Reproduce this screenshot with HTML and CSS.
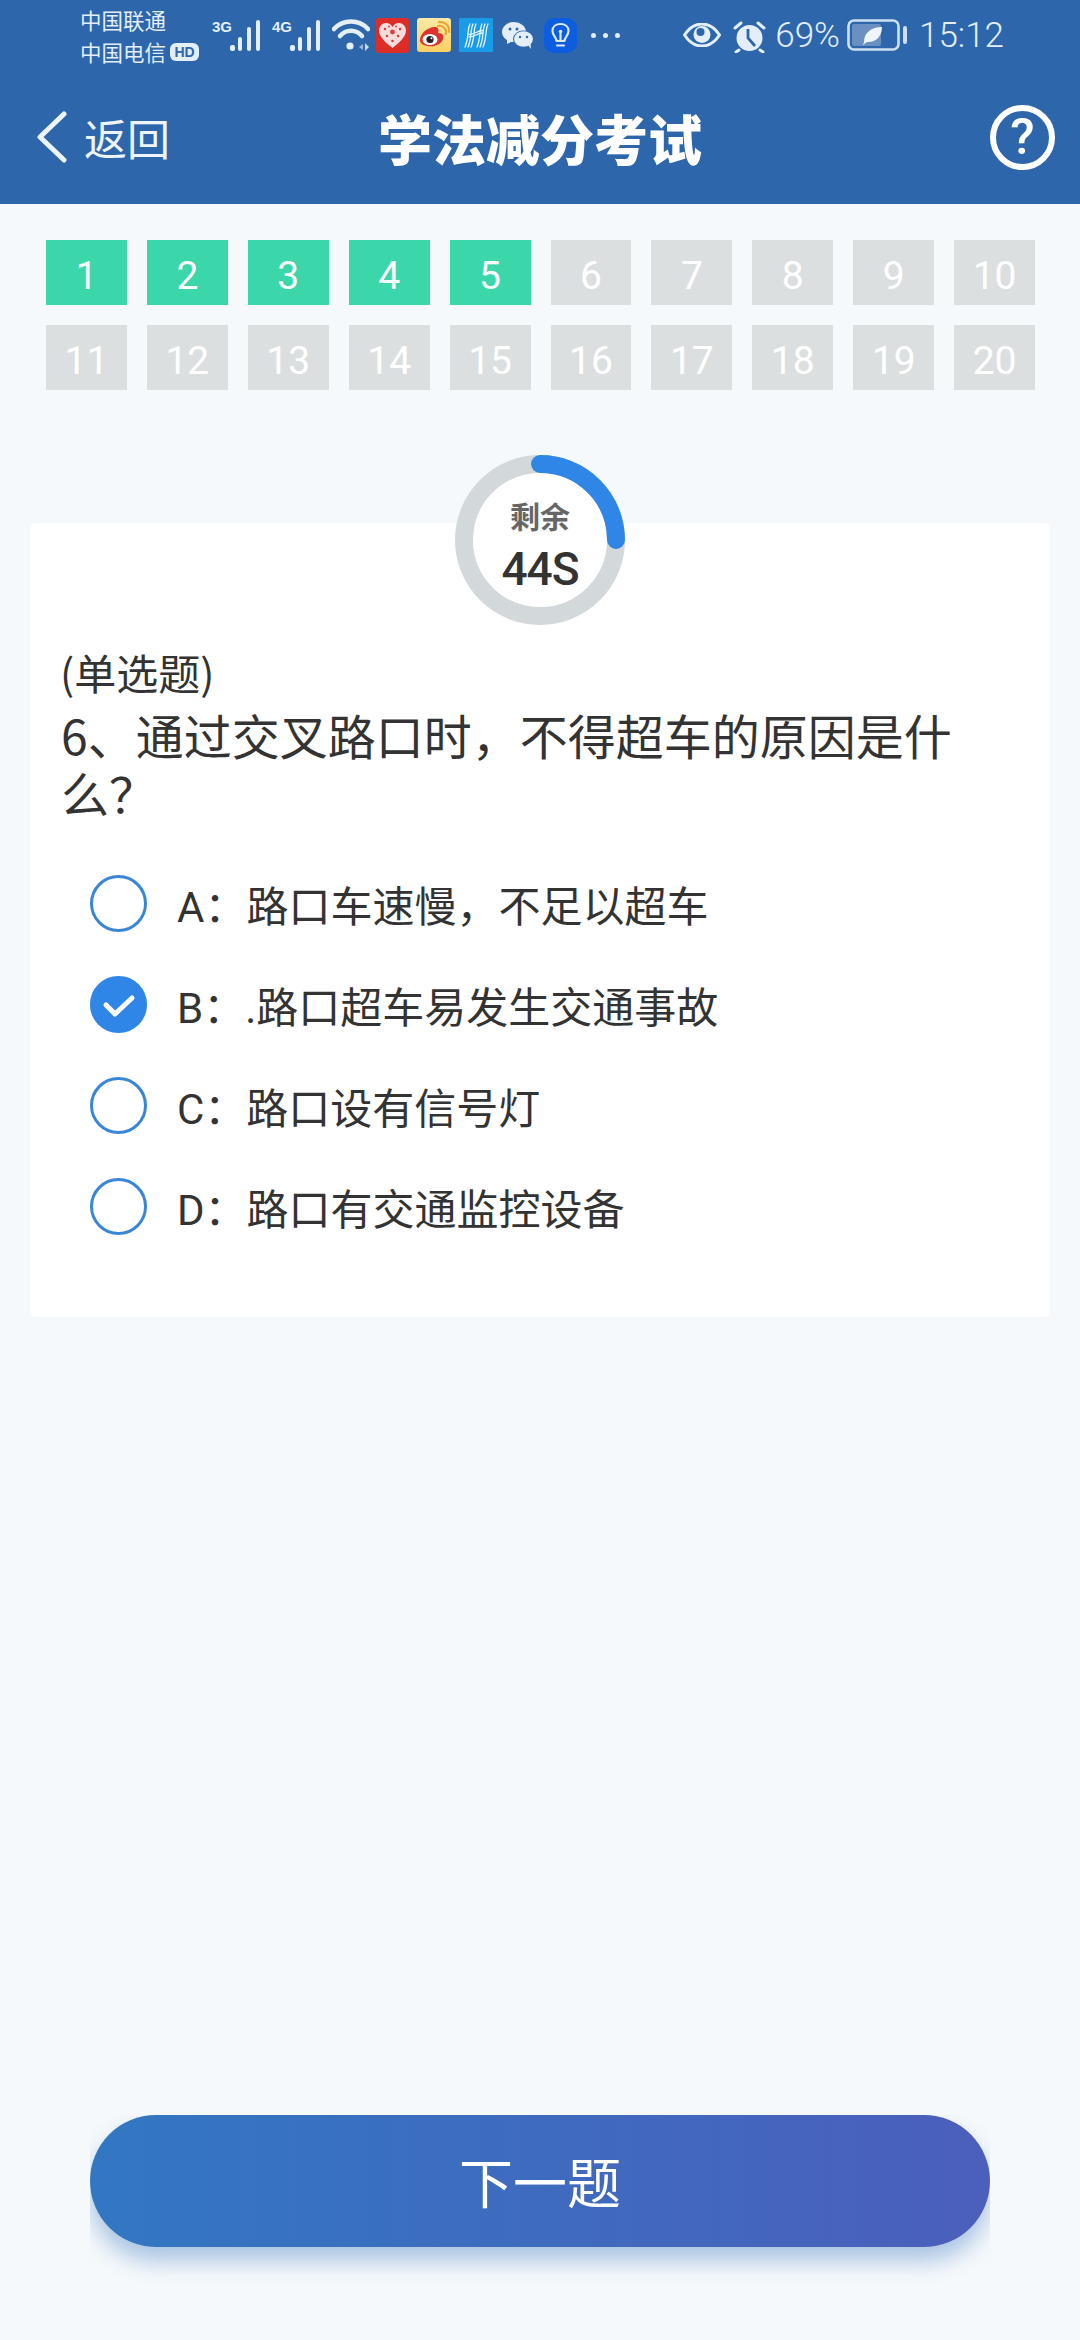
FILE: index.html
```html
<!DOCTYPE html>
<html lang="zh">
<head>
<meta charset="utf-8">
<title>学法减分考试</title>
<link rel="stylesheet" href="styles.css">
</head>
<body>
<div class="page">
  <header class="header">
    <div class="status">
      <div class="carriers">
        <div>中国联通</div>
        <div class="carrier-2">中国电信<span class="hd">HD</span></div>
      </div>
      <svg class="ic-signal" width="49" height="36" viewBox="0 0 49 36">
        <text x="0" y="15" class="net">3G</text>
        <g fill="#e3eef8"><rect x="18" y="28" width="5" height="6" rx="2"/><rect x="26" y="20" width="4" height="14" rx="2"/><rect x="35" y="10" width="4" height="24" rx="2"/><rect x="44" y="3" width="4" height="31" rx="2"/></g>
      </svg>
      <svg class="ic-signal2" width="49" height="36" viewBox="0 0 49 36">
        <text x="0" y="15" class="net">4G</text>
        <g fill="#e3eef8"><rect x="18" y="28" width="5" height="6" rx="2"/><rect x="26" y="20" width="4" height="14" rx="2"/><rect x="35" y="10" width="4" height="24" rx="2"/><rect x="44" y="3" width="4" height="31" rx="2"/></g>
      </svg>
      <svg class="ic-wifi" width="38" height="34" viewBox="0 0 38 34" fill="none" stroke="#e3eef8" stroke-width="4.5" stroke-linecap="round">
        <path d="M2 11 C11 1 27 1 36 11"/><path d="M8 18 C14 11 24 11 30 18"/>
        <circle cx="18" cy="28" r="3.6" fill="#e3eef8" stroke="none"/>
        <path d="M31 26l-4 3 4 3z" fill="#9db9d8" stroke="none"/><path d="M33 25l4 4-4 4z" fill="#c9dbee" stroke="none"/>
      </svg>
      <svg class="ic-pdd" width="33" height="35" viewBox="0 0 33 35">
        <rect width="33" height="35" rx="3" fill="#dc2d27"/>
        <path d="M16.5 30 C10 25 3 19 3 12.500 C3 8 6.500 5 10 5 C13 5 15 6.500 16.500 9 C18 6.500 20 5 23 5 C26.500 5 30 8 30 12.500 C30 19 23 25 16.500 30Z" fill="#f6dcdc"/>
        <g fill="#d8423e"><circle cx="16.500" cy="14" r="2.400"/><circle cx="9" cy="11" r="1.300"/><circle cx="24" cy="11" r="1.300"/><circle cx="11" cy="18" r="1.300"/><circle cx="22" cy="18" r="1.300"/><circle cx="16.500" cy="23" r="1.300"/><circle cx="13" cy="8.500" r="1"/><circle cx="20" cy="8.500" r="1"/></g>
      </svg>
      <svg class="ic-weibo" width="34" height="34" viewBox="0 0 34 34">
        <defs><linearGradient id="wb" x1="0" y1="0" x2="0" y2="1"><stop offset="0" stop-color="#fbe9a6"/><stop offset="1" stop-color="#f8cf62"/></linearGradient></defs>
        <rect width="34" height="34" rx="3" fill="url(#wb)"/>
        <path d="M3 22 C3 15 12 8 19 9 C22 10 22 13 21 15 C26 15 27 18 26 21 C24 27 17 29 11 28 C6 27.500 3 25 3 22Z" fill="#e0322c"/>
        <ellipse cx="13" cy="21.500" rx="7.500" ry="5.500" fill="#fff"/>
        <circle cx="13" cy="21.500" r="3.600" fill="#222"/><circle cx="14.500" cy="20.300" r="1" fill="#fff"/>
        <path d="M21 8 C26 7 30 11 29 16M22 4 C29 3 33 9 32 14" fill="none" stroke="#eda42b" stroke-width="2" stroke-linecap="round"/>
      </svg>
      <svg class="ic-hello" width="34" height="34" viewBox="0 0 34 34" fill="none" stroke="#e6f5fe" stroke-width="1.300" stroke-linecap="round">
        <rect width="34" height="34" rx="1" fill="#1a9be8" stroke="none"/>
        <path d="M6 29 C10 20 8 12 11 6M9 29 C13 20 11 12 14 6M12 29 C16 20 14 12 17 6"/>
        <path d="M18 29 C22 20 20 12 23 6M21 29 C25 20 23 12 26 6M24 29 C28 20 26 12 29 6"/>
        <path d="M10 19 C16 19 18 15 24 15M10 16.500 C16 16.500 18 12.500 24 12.500"/>
      </svg>
      <svg class="ic-wechat" width="32" height="27" viewBox="0 0 32 27">
        <ellipse cx="12" cy="10" rx="12" ry="10" fill="#e3eef8"/><path d="M5 17l0 5 6-3z" fill="#e3eef8"/>
        <ellipse cx="21.500" cy="17" rx="10.500" ry="8.500" fill="#2d66ab"/>
        <ellipse cx="21.500" cy="17" rx="9.500" ry="7.800" fill="#e3eef8"/><path d="M26 23l3 4-.5-6z" fill="#e3eef8"/>
        <circle cx="8" cy="7" r="1.500" fill="#2d66ab"/><circle cx="15" cy="7" r="1.500" fill="#2d66ab"/><circle cx="18" cy="15" r="1.200" fill="#2d66ab"/><circle cx="25" cy="15" r="1.200" fill="#2d66ab"/>
      </svg>
      <svg class="ic-bulb" width="33" height="35" viewBox="0 0 33 35" fill="none" stroke="#dbe9fb" stroke-width="2.200" stroke-linecap="round" stroke-linejoin="round">
        <rect width="33" height="35" rx="10" fill="#0c5de0" stroke="none"/>
        <path d="M12.500 23 C12.500 19 8.500 18 8.500 13 C8.500 8.500 12 6 16.500 6 C21 6 24.500 8.500 24.500 13 C24.500 18 20.500 19 20.500 23Z"/>
        <path d="M13 27.500h7"/><path d="M16.500 15v8" /><circle cx="16.500" cy="13.500" r="1.800" fill="#dbe9fb" stroke="none"/>
      </svg>
      <div class="dots"><i></i><i></i><i></i></div>
      <div class="status-right">
        <svg class="ic-eye" width="38" height="24" viewBox="0 0 38 24">
          <path d="M1.500 12 C8 2 14 1 19 1 C24 1 30 2 36.500 12 C30 22 24 23 19 23 C14 23 8 22 1.500 12Z" fill="none" stroke="#e3eef8" stroke-width="3"/>
          <circle cx="19" cy="11.500" r="8.500" fill="#e3eef8"/><circle cx="17.500" cy="9" r="4" fill="#2d66ab"/>
        </svg>
        <svg class="ic-alarm" width="33" height="33" viewBox="0 0 33 33">
          <circle cx="16.500" cy="18" r="13" fill="#e3eef8"/>
          <path d="M2 8l6-5M31 8l-6-5M6 30l-3 2M27 30l3 2" stroke="#e3eef8" stroke-width="3" stroke-linecap="round"/>
          <path d="M15 9v9l7 8" fill="none" stroke="#2d66ab" stroke-width="2.800"/>
        </svg>
        <span class="pct">69%</span>
        <svg class="ic-batt" width="60" height="32" viewBox="0 0 60 32">
          <rect x="1.500" y="1.500" width="50" height="29" rx="5.500" fill="none" stroke="#cfe0f2" stroke-width="2.600"/>
          <rect x="5" y="5" width="29" height="22" rx="2" fill="#6a90c2"/>
          <path d="M17 23 C17 14 24 8 35 8 C35 18 28 24 20 23 L16 26Z" fill="#eef4fb"/>
          <rect x="56" y="7" width="4" height="18" rx="2" fill="#cfe0f2"/>
        </svg>
        <span class="clock">15:12</span>
      </div>
    </div>
    <nav class="nav">
      <div class="back">
        <svg class="chev" width="32" height="52" viewBox="0 0 32 52" fill="none" stroke="#eef4fb" stroke-width="5" stroke-linecap="round" stroke-linejoin="round"><path d="M28 3 L4 26 L28 49"/></svg>
        <span>返回</span>
      </div>
      <h1 class="title">学法减分考试</h1>
      <div class="help">?</div>
    </nav>
  </header>

  <main class="main">
    <div class="tiles">
      <div class="tile done">1</div><div class="tile done">2</div><div class="tile done">3</div><div class="tile done">4</div><div class="tile done">5</div>
      <div class="tile">6</div><div class="tile">7</div><div class="tile">8</div><div class="tile">9</div><div class="tile">10</div>
      <div class="tile">11</div><div class="tile">12</div><div class="tile">13</div><div class="tile">14</div><div class="tile">15</div>
      <div class="tile">16</div><div class="tile">17</div><div class="tile">18</div><div class="tile">19</div><div class="tile">20</div>
    </div>

    <section class="card">
      <div class="timer">
        <svg class="ring" width="170" height="170" viewBox="0 0 170 170" fill="none">
          <circle cx="85" cy="85" r="76" stroke="#d3d9db" stroke-width="18" fill="#fff"/>
          <path d="M85 9 A76 76 0 0 1 161 85" stroke="#2f86e6" stroke-width="18" stroke-linecap="round"/>
        </svg>
        <div class="timer-label">剩余</div>
        <div class="timer-value">44S</div>
      </div>
      <div class="qtype">(单选题)</div>
      <div class="question">6、通过交叉路口时，不得超车的原因是什么？</div>
      <div class="options">
        <div class="option"><span class="radio"></span><span>A：路口车速慢，不足以超车</span></div>
        <div class="option"><span class="radio on"><svg width="57" height="57" viewBox="0 0 57 57" fill="none"><path d="M16 29 L25 38 L42 22" stroke="#fff" stroke-width="5" stroke-linecap="round" stroke-linejoin="round"/></svg></span><span>B：.路口超车易发生交通事故</span></div>
        <div class="option"><span class="radio"></span><span>C：路口设有信号灯</span></div>
        <div class="option"><span class="radio"></span><span>D：路口有交通监控设备</span></div>
      </div>
    </section>
  </main>

  <footer class="footer">
    <div class="next">下一题</div>
  </footer>
</div>
</body>
</html>
```
FILE: styles.css
```css
* { box-sizing: border-box; }
html, body { margin: 0; padding: 0; }
body {
  width: 1080px;
  height: 2340px;
  overflow: hidden;
  background: #f5f9fb;
  font-family: "Noto Sans CJK SC", "Noto Sans", sans-serif;
  color: #333;
}
.page { height: 2340px; display: flex; flex-direction: column; }

/* header */
.header { height: 204px; background: #2d66ab; color: #fff; flex: none; }
.status {
  height: 70px;
  display: flex;
  align-items: center;
  padding-left: 80px;
  color: #e3eef8;
}
.carriers { width: 132px; font-size: 21.5px; line-height: 32px; padding-top: 2px; white-space: nowrap; }
.carrier-2 { display: flex; align-items: center; }
.hd {
  margin-left: 4px;
  width: 29px;
  height: 18px;
  border-radius: 6px;
  background: #e3eef8;
  color: #2d66ab;
  font: 700 14px/18px "Liberation Sans", sans-serif;
  text-align: center;
}
.net { font: 700 15px "Liberation Sans Narrow", "Liberation Sans", sans-serif; fill: #e3eef8; }
.ic-signal2 { margin-left: 11px; }
.ic-wifi { margin-left: 11px; }
.ic-pdd { margin-left: 6px; }
.ic-weibo { margin-left: 8px; }
.ic-hello { margin-left: 8px; }
.ic-wechat { margin-left: 9px; }
.ic-bulb { margin-left: 10px; }
.dots { margin-left: 14px; display: flex; gap: 7px; margin-top: 0; }
.dots i { width: 5px; height: 5px; border-radius: 50%; background: #e3eef8; }
.status-right { margin-left: auto; padding-right: 76px; display: flex; align-items: center; }
.ic-alarm { margin-left: 12px; margin-top: 2px; }
.pct { margin-left: 9px; font: 300 35px/1 Roboto, sans-serif; }
.ic-batt { margin-left: 7px; }
.clock { margin-left: 12px; font: 300 35px/1 Roboto, sans-serif; }

.nav {
  height: 134px;
  padding: 0 25px;
  display: grid;
  grid-template-columns: 1fr auto 1fr;
  align-items: center;
}
.back { padding-left: 11px; display: flex; align-items: center; gap: 16px; font-size: 43px; color: #eef4fb; }
.title { margin: 2px 0 0; font-size: 54px; font-weight: 900; line-height: 1; color: #fff; }
.help {
  justify-self: end;
  width: 65px;
  height: 65px;
  border: 6px solid #fff;
  border-radius: 50%;
  font: 500 50px/53px Roboto, sans-serif;
  text-align: center;
}

/* tiles */
.main { flex: 1; }
.tiles {
  padding: 36px 45px 0 46px;
  display: grid;
  grid-template-columns: repeat(10, 1fr);
  gap: 20px;
}
.tile {
  height: 65px;
  padding-top: 4px;
  background: #dbdfe0;
  color: #fff;
  font: 400 39px/65px Roboto, sans-serif;
  text-align: center;
}
.tile.done { background: #3bd6a9; }

/* card */
.card {
  position: relative;
  margin: 133px 30px 0;
  padding: 121px 31px 60px;
  background: #fff;
  border-radius: 6px;
}
.timer {
  position: absolute;
  top: -68px;
  left: 425px;
  width: 170px;
  height: 170px;
  text-align: center;
}
.ring { position: absolute; top: 0; left: 0; }
.timer-label {
  position: relative;
  padding-top: 40px;
  font-size: 30px;
  font-weight: 700;
  line-height: 40px;
  color: #666;
}
.timer-value {
  position: relative;
  margin-top: 7px;
  font: 500 46px/54px Roboto, sans-serif;
  letter-spacing: -1px;
  color: #333;
}
.qtype { font-size: 42px; line-height: 56px; margin-left: -1px; }
.question { margin-top: 5px; font-size: 48px; line-height: 58px; }
.options { margin-top: 32px; }
.option {
  height: 101px;
  padding-left: 29px;
  display: flex;
  align-items: center;
  gap: 30px;
  font-size: 42px;
  font-family: Roboto, "Noto Sans CJK SC", sans-serif;
}
.radio {
  flex: none;
  width: 57px;
  height: 57px;
  border: 3.500px solid #3a86d6;
  border-radius: 50%;
  display: flex;
  align-items: center;
  justify-content: center;
}
.radio.on { background: #2f86e6; border-color: #2f86e6; }
.radio svg { flex: none; }

/* footer */
.footer { flex: none; padding: 0 90px 93px; }
.next {
  height: 132px;
  border-radius: 66px;
  background: linear-gradient(90deg, #3277c2, #4b5fbb);
  box-shadow: 0 14px 22px rgba(50, 110, 190, .38);
  clip-path: inset(0 0 -60px 0);
  color: #fff;
  font-size: 54px;
  line-height: 132px;
  text-align: center;
}
```
